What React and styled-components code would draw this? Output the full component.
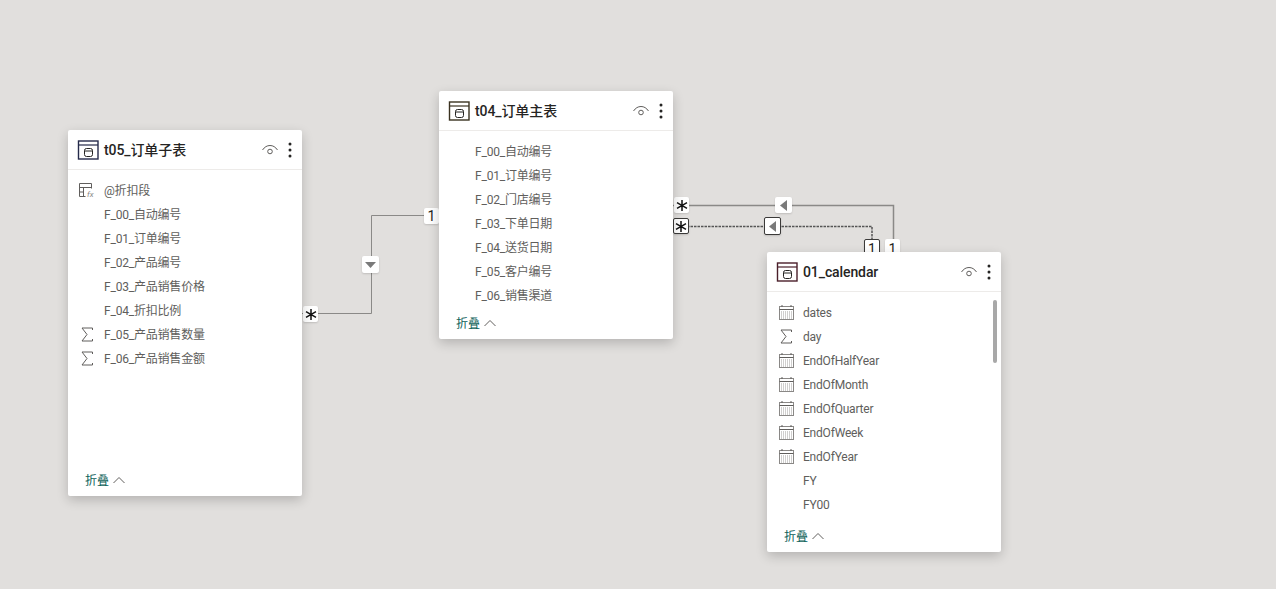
import React from 'react';
import styled, { createGlobalStyle } from 'styled-components';

const GlobalStyle = createGlobalStyle`
  html, body {
    margin: 0;
    padding: 0;
    background: #e1dfdd;
    overflow: hidden;
  }
  body {
    font-family: Roboto, "Noto Sans CJK SC", sans-serif;
  }
`;

const Canvas = styled.div`
  position: relative;
  width: 1276px;
  height: 589px;
  overflow: hidden;
  background: #e1dfdd;
`;

const Wires = styled.svg`
  position: absolute;
  left: 0;
  top: 0;
`;

const Card = styled.section`
  position: absolute;
  left: ${(p) => p.$x}px;
  top: ${(p) => p.$y}px;
  width: 234px;
  height: ${(p) => p.$h}px;
  display: flex;
  flex-direction: column;
  background: #fff;
  border-radius: 2px;
  box-shadow: 0 4px 12px rgba(0, 0, 0, 0.2);
`;

const CardHead = styled.header`
  flex: none;
  height: 39px;
  display: flex;
  align-items: center;
  padding: 0 10px 0 9px;
  border-bottom: 1px solid #edebe9;
`;

const CardTitle = styled.h3`
  flex: 1;
  margin: 0 0 0 5px;
  font-size: 14px;
  line-height: 18px;
  font-weight: 500;
  letter-spacing: -0.1px;
  color: #252423;
  white-space: nowrap;
`;

const EyeWrap = styled.span`
  display: flex;
  margin-right: 10px;
`;

const CardBody = styled.div`
  position: relative;
  flex: 1;
  min-height: 0;
  overflow: hidden;
  padding-top: 8px;
`;

const Row = styled.div`
  height: 24px;
  display: flex;
  align-items: center;
  padding-left: 10px;
`;

const RowIcon = styled.span`
  flex: none;
  width: 18px;
  height: 18px;
  margin-right: 8px;
  display: flex;
  align-items: center;
  justify-content: center;
`;

const RowLabel = styled.span`
  padding-top: 2px;
  font-size: 12px;
  line-height: 16px;
  letter-spacing: -0.2px;
  color: #605e5c;
  white-space: nowrap;
`;

const ScrollThumb = styled.div`
  position: absolute;
  right: 4px;
  top: 8px;
  width: 4px;
  height: 63px;
  border-radius: 2px;
  background: #a8a8a8;
`;

const CardFoot = styled.footer`
  flex: none;
  height: 32px;
  display: flex;
  align-items: center;
  gap: 4px;
  padding-left: 17px;
`;

const FootLabel = styled.span`
  padding-top: 2px;
  font-size: 12px;
  line-height: 16px;
  color: #0b5f58;
`;

const Badge = styled.div`
  position: absolute;
  left: ${(p) => p.$x}px;
  top: ${(p) => p.$y}px;
  width: ${(p) => p.$w || 15}px;
  height: ${(p) => p.$h || 16}px;
  box-sizing: border-box;
  display: flex;
  align-items: center;
  justify-content: center;
  background: #fff;
  border-radius: 2px;
  border: ${(p) => (p.$active ? '1px solid #3b3a39' : 'none')};
  box-shadow: 0 1px 2px rgba(0, 0, 0, 0.15);
  font-size: 14px;
  color: #252423;
`;

const TableIcon = ({ tint }) => (
  <svg width="22" height="20" viewBox="0 0 22 20" fill="none">
    <rect x="1.500" y="1" width="19.500" height="18" stroke={tint} strokeWidth="1.400" />
    <path d="M1 5h20" stroke={tint} strokeWidth="1.200" />
    <rect x="7.500" y="8.500" width="8" height="8" rx="2" stroke="#252423" />
    <path d="M7.500 11h8" stroke="#252423" />
  </svg>
);

const EyeIcon = () => (
  <svg width="16" height="12" viewBox="0 0 16 12" fill="none" stroke="#605e5c">
    <path d="M.5 6C2.500 3 5 1.500 8 1.500s5.500 1.500 7.500 4.500" />
    <circle cx="8" cy="7.500" r="2.300" />
  </svg>
);

const KebabIcon = () => (
  <svg width="4" height="16" viewBox="0 0 4 16" fill="#252423">
    <circle cx="2" cy="2" r="1.500" />
    <circle cx="2" cy="8" r="1.500" />
    <circle cx="2" cy="14" r="1.500" />
  </svg>
);

const SigmaIcon = () => (
  <svg width="14" height="15" viewBox="0 0 14 15" fill="none" stroke="#605e5c">
    <path d="M12.500 3V1H2l5 6.500L2 14h10.500v-2" />
  </svg>
);

const CalendarIcon = () => (
  <svg width="17" height="17" viewBox="0 0 17 17" fill="none" stroke="#8a8886">
    <rect x="1.500" y="2.500" width="14" height="13" />
    <path d="M1.500 5.500h14" stroke="#605e5c" />
    <path d="M4 1v2M13 1v2" stroke="#605e5c" />
    <path d="M3 8h11M3 10h11M3 12h11M3 14h11" stroke="#a19f9d" strokeDasharray="1 1" />
  </svg>
);

const CalcIcon = () => (
  <svg width="18" height="16" viewBox="0 0 18 16" fill="none" stroke="#605e5c">
    <path d="M1.500 14.500v-13h12v5" />
    <path d="M1.500 5.500h12M5.500 5.500v9M1.500 10h4M1.500 14.500h6" />
    <text x="9" y="14.500" fontSize="8" fontStyle="italic" fill="#8a8886" stroke="none">fx</text>
  </svg>
);

const Chevron = () => (
  <svg width="12" height="8" viewBox="0 0 12 8" fill="none" stroke="#605e5c">
    <path d="M.5 7L6 1.500 11.500 7" />
  </svg>
);

const StarGlyph = () => (
  <svg width="12" height="11" viewBox="0 0 12 11" stroke="#111" strokeWidth="1.500">
    <path d="M6 0v11M1 2.700l10 5.600M1 8.300l10-5.600" />
  </svg>
);

const ArrowLeft = () => (
  <svg width="7" height="11" viewBox="0 0 7 11" fill="#7a7a7a">
    <path d="M7 0v11L0 5.500z" />
  </svg>
);

const ArrowDown = () => (
  <svg width="11" height="6" viewBox="0 0 11 6" fill="#7a7a7a">
    <path d="M0 0h11L5.500 6z" />
  </svg>
);

const icons = {
  sigma: <SigmaIcon />,
  calendar: <CalendarIcon />,
  calc: <CalcIcon />,
};

const tables = [
  {
    name: 't05_订单子表',
    x: 68,
    y: 130,
    h: 366,
    tint: '#252a4a',
    rows: [
      ['@折扣段', 'calc'],
      ['F_00_自动编号'],
      ['F_01_订单编号'],
      ['F_02_产品编号'],
      ['F_03_产品销售价格'],
      ['F_04_折扣比例'],
      ['F_05_产品销售数量', 'sigma'],
      ['F_06_产品销售金额', 'sigma'],
    ],
  },
  {
    name: 't04_订单主表',
    x: 439,
    y: 91,
    h: 248,
    tint: '#3a3220',
    rows: [
      ['F_00_自动编号'],
      ['F_01_订单编号'],
      ['F_02_门店编号'],
      ['F_03_下单日期'],
      ['F_04_送货日期'],
      ['F_05_客户编号'],
      ['F_06_销售渠道'],
    ],
  },
  {
    name: '01_calendar',
    x: 767,
    y: 252,
    h: 300,
    tint: '#4a1f2a',
    scroll: true,
    rows: [
      ['dates', 'calendar'],
      ['day', 'sigma'],
      ['EndOfHalfYear', 'calendar'],
      ['EndOfMonth', 'calendar'],
      ['EndOfQuarter', 'calendar'],
      ['EndOfWeek', 'calendar'],
      ['EndOfYear', 'calendar'],
      ['FY'],
      ['FY00'],
    ],
  },
];

const TableCard = ({ table }) => (
  <Card $x={table.x} $y={table.y} $h={table.h}>
    <CardHead>
      <TableIcon tint={table.tint} />
      <CardTitle>{table.name}</CardTitle>
      <EyeWrap>
        <EyeIcon />
      </EyeWrap>
      <KebabIcon />
    </CardHead>
    <CardBody>
      {table.rows.map(([label, icon]) => (
        <Row key={label}>
          <RowIcon>{icon && icons[icon]}</RowIcon>
          <RowLabel>{label}</RowLabel>
        </Row>
      ))}
      {table.scroll && <ScrollThumb />}
    </CardBody>
    <CardFoot>
      <FootLabel>折叠</FootLabel>
      <Chevron />
    </CardFoot>
  </Card>
);

const App = () => (
  <Canvas>
    <GlobalStyle />
    <Wires width="1276" height="589" fill="none" stroke="#8a8987">
      <path d="M302 313.500H371.500V215.500H439" />
      <path d="M673 205.500H893.500V252" strokeWidth="1.500" />
      <path d="M673 226.500H872V240" stroke="#555" strokeWidth="1.500" strokeDasharray="2.500 1" />
    </Wires>

    <Badge $x={303} $y={306}><StarGlyph /></Badge>
    <Badge $x={424} $y={208}>1</Badge>
    <Badge $x={362} $y={256} $w={17} $h={17}><ArrowDown /></Badge>

    <Badge $x={674} $y={197}><StarGlyph /></Badge>
    <Badge $x={673} $y={218} $w={16} $active><StarGlyph /></Badge>
    <Badge $x={775} $y={197} $w={17}><ArrowLeft /></Badge>
    <Badge $x={764} $y={217} $w={17} $h={18} $active><ArrowLeft /></Badge>
    <Badge $x={864} $y={239} $w={16} $h={20} $active>1</Badge>
    <Badge $x={885} $y={239} $h={20}>1</Badge>

    {tables.map((t) => (
      <TableCard key={t.name} table={t} />
    ))}
  </Canvas>
);

export default App;
